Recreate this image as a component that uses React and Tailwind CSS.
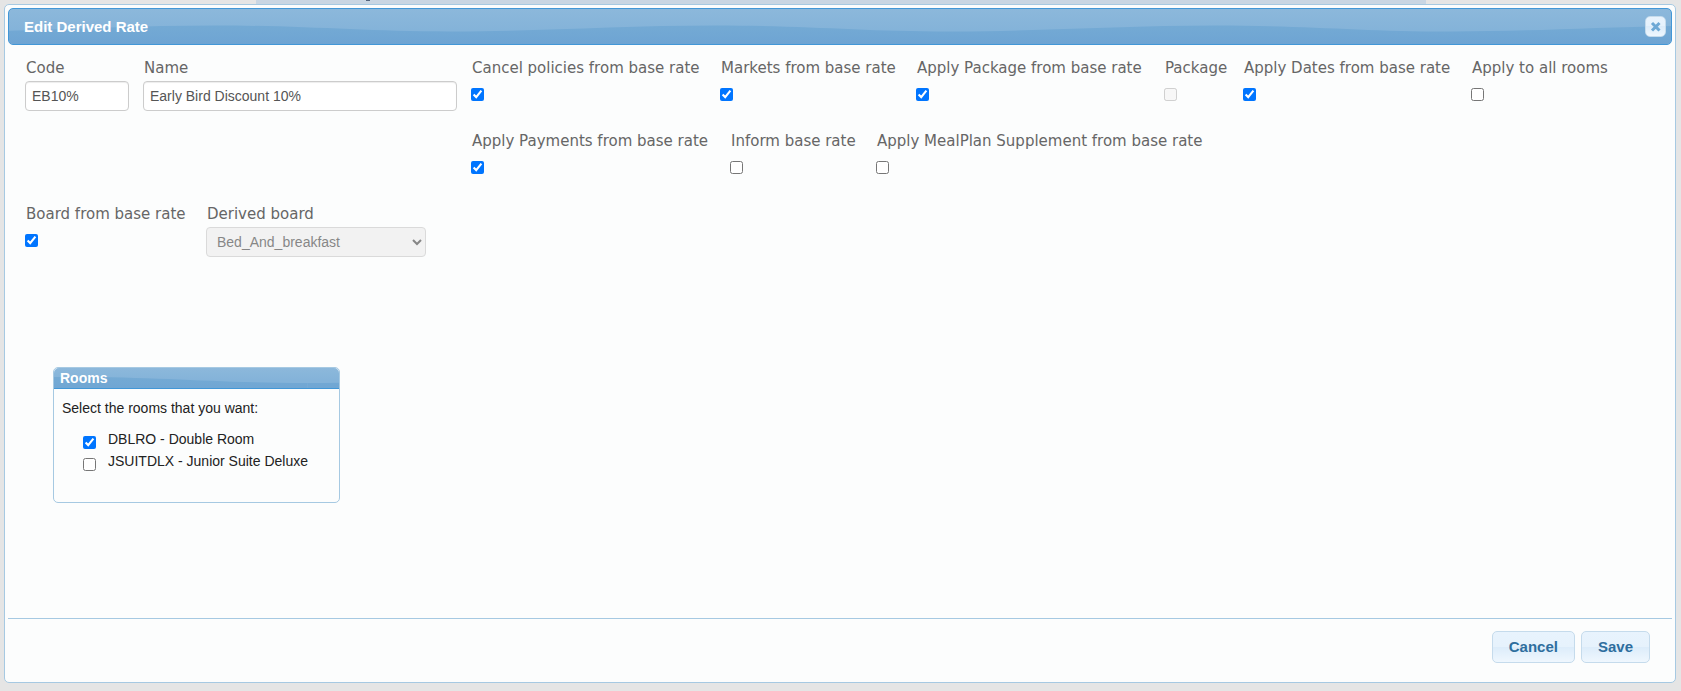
import { useId } from "react";

const REPEATS = [-3, -2, -1, 0, 1, 2, 3];

function Wave() {
  const id = useId();
  return (
    <svg aria-hidden="true" className="absolute inset-0 h-full w-full">
      <defs>
        <linearGradient id={id} gradientUnits="userSpaceOnUse" x1="0" y1="-1" x2="0" y2="18">
          <stop offset="0" stopColor="#74aad4" />
          <stop offset="1" stopColor="#6ea4d3" />
        </linearGradient>
      </defs>
      <svg x="50%" y="50%" overflow="visible">
        {REPEATS.map((n) => (
          <path
            key={n}
            transform={`translate(${n * 500 - 250} 0)`}
            fill={`url(#${id})`}
            d="M-139 5 C-50 5 30 -1 125 -1 C220 -1 270 5 361 5 V40 H-139 Z"
          />
        ))}
      </svg>
    </svg>
  );
}

const labelClass = "block whitespace-nowrap pl-px text-[15px] leading-5 text-[#666]";
const fieldClass =
  "block h-[30px] rounded border border-[#ccc] bg-white px-[6px] font-[Liberation_Sans,Arial,sans-serif] text-sm text-[#555] shadow-[inset_0_1px_1px_rgba(0,0,0,0.075)]";
const buttonClass =
  "h-8 rounded-[5px] border border-[#c5dbec] bg-[linear-gradient(#e8f3fd_0%,#e6f2fc_49%,#dcecfa_50%,#eff7fe_100%)] px-4 text-[15px] leading-5 font-bold text-[#2e6e9e]";

function Check({ id, label, width, checked = false, disabled = false }) {
  return (
    <div className={width}>
      <label htmlFor={id} className={labelClass}>
        {label}
      </label>
      <input
        id={id}
        type="checkbox"
        defaultChecked={checked}
        disabled={disabled}
        className="mt-[10px] block size-[13px]"
      />
    </div>
  );
}

export default function App() {
  return (
    <div className="min-h-screen bg-[#e5e5e5] pb-2 font-[Liberation_Sans,Arial,sans-serif] text-sm text-[#222]">
      <div className="mx-auto h-1 max-w-[1170px] bg-[#c9d6e3] pl-[110px]">
        <svg aria-hidden="true" width="4" height="1" className="block">
          <rect width="4" height="1" fill="#52647d" />
        </svg>
      </div>
      <section
        role="dialog"
        aria-labelledby="dialog-title"
        className="ml-1 mr-[5px] flex min-h-[679px] flex-col rounded-[5px] border border-[#a6c9e2] bg-[#fcfdfd] p-[3px]"
      >
        <header className="relative h-[37px] shrink-0 overflow-hidden rounded-[5px] border border-[#4297d7] bg-[linear-gradient(#8cb8db,#84b3d9_60%)]">
          <Wave />
          <div className="relative flex h-full items-center justify-between pl-[15px] pr-[5px]">
            <h1 id="dialog-title" className="text-[15px] leading-5 font-bold text-white">
              Edit Derived Rate
            </h1>
            <button
              type="button"
              aria-label="Close"
              className="flex size-[21px] items-center justify-center rounded-[5px] border border-[#c5dbec] bg-[linear-gradient(#e8f3fd_0%,#e6f2fc_49%,#dcecfa_50%,#eff7fe_100%)]"
            >
              <svg width="11" height="11" viewBox="0 0 11 11" aria-hidden="true">
                <path d="M2 2 L9.5 9.5 M9.5 2 L2 9.5" stroke="#6da8d5" strokeWidth="3" fill="none" />
              </svg>
            </button>
          </div>
        </header>

        <form className="flex grow flex-col">
          <div className="grow px-[17px] pt-[13px] font-[DejaVu_Sans,Verdana,sans-serif]">
            <div className="flex items-start">
              <div className="mr-[14px] w-[104px] shrink-0">
                <label htmlFor="code" className={labelClass}>
                  Code
                </label>
                <input id="code" type="text" defaultValue="EB10%" className={`${fieldClass} mt-[3px] w-full`} />
              </div>
              <div className="mr-[14px] w-[314px] shrink-0">
                <label htmlFor="name" className={labelClass}>
                  Name
                </label>
                <input
                  id="name"
                  type="text"
                  defaultValue="Early Bird Discount 10%"
                  className={`${fieldClass} mt-[3px] w-full`}
                />
              </div>
              <div className="flex flex-col gap-[30px]">
                <div className="flex">
                  <Check id="cancel-policies" label="Cancel policies from base rate" width="w-[249px]" checked />
                  <Check id="markets" label="Markets from base rate" width="w-[196px]" checked />
                  <Check id="apply-package" label="Apply Package from base rate" width="w-[248px]" checked />
                  <Check id="package" label="Package" width="w-[79px]" disabled />
                  <Check id="apply-dates" label="Apply Dates from base rate" width="w-[228px]" checked />
                  <Check id="all-rooms" label="Apply to all rooms" width="w-[156px]" />
                </div>
                <div className="flex">
                  <Check id="apply-payments" label="Apply Payments from base rate" width="w-[259px]" checked />
                  <Check id="inform" label="Inform base rate" width="w-[146px]" />
                  <Check id="mealplan" label="Apply MealPlan Supplement from base rate" width="w-[350px]" />
                </div>
              </div>
            </div>

            <div className="mt-[30px] flex items-start">
              <Check id="board-base" label="Board from base rate" width="w-[181px]" checked />
              <div>
                <label htmlFor="board" className={labelClass}>
                  Derived board
                </label>
                <select
                  id="board"
                  disabled
                  className="mt-[3px] block h-[30px] w-[220px] rounded border border-[#ccc] bg-[#eee] px-[6px] font-[Liberation_Sans,Arial,sans-serif] text-sm text-[#555] opacity-70"
                >
                  <option>Bed_And_breakfast</option>
                </select>
              </div>
            </div>

            <fieldset className="mt-[110px] ml-7 w-[287px] overflow-hidden rounded-[5px] border border-[#a6c9e2] font-[Liberation_Sans,Arial,sans-serif]">
              <div className="relative -mx-px -mt-px h-[22px] overflow-hidden rounded-t-[5px] border border-[#4297d7] bg-[linear-gradient(#8cb8db,#84b3d9_60%)]">
                <Wave />
                <h2 className="relative pl-[6px] text-sm leading-5 font-bold text-white">Rooms</h2>
              </div>
              <div className="h-[113px] px-2 pt-[9px]">
                <p className="leading-5">Select the rooms that you want:</p>
                <div className="mt-[11px] flex flex-col gap-[2px] pl-[21px]">
                  <div className="flex gap-3">
                    <input id="dblro" type="checkbox" defaultChecked className="mt-[7px] size-[13px]" />
                    <label htmlFor="dblro" className="leading-5">
                      DBLRO - Double Room
                    </label>
                  </div>
                  <div className="flex gap-3">
                    <input id="jsuit" type="checkbox" className="mt-[7px] size-[13px]" />
                    <label htmlFor="jsuit" className="leading-5">
                      JSUITDLX - Junior Suite Deluxe
                    </label>
                  </div>
                </div>
              </div>
            </fieldset>
          </div>

          <footer className="flex h-[61px] justify-end gap-[6px] border-t border-[#a6c9e2] pt-3 pr-[22px]">
            <button type="button" className={buttonClass}>
              Cancel
            </button>
            <button type="submit" className={buttonClass}>
              Save
            </button>
          </footer>
        </form>
      </section>
    </div>
  );
}
